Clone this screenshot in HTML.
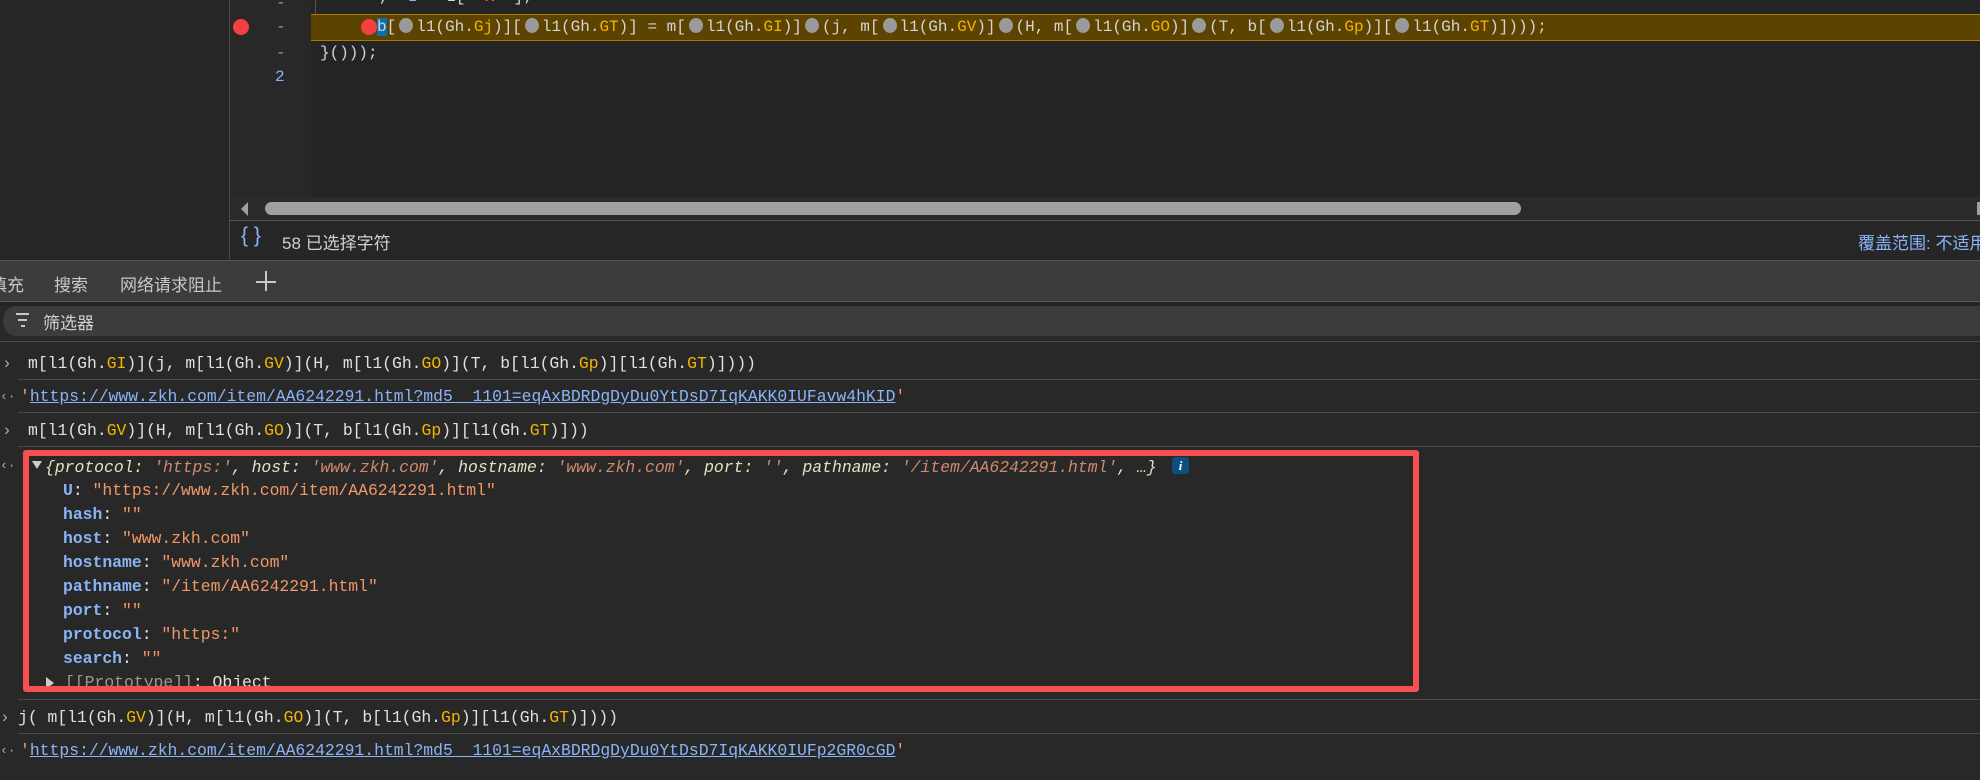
<!DOCTYPE html>
<html><head><meta charset="utf-8"><style>
*{margin:0;padding:0;box-sizing:border-box}
body{width:1980px;height:780px;overflow:hidden;background:#282828;position:relative;font-family:"Liberation Sans","Noto Sans CJK SC",sans-serif;color:#d0d0d0}
.a{position:absolute;white-space:pre}
.mono{font-family:"Liberation Mono","Noto Sans CJK SC",monospace}
.code{font-size:16px;color:#d4d4d4;line-height:25px}
.y{color:#f2b600}
.d{display:inline-block;width:14px;height:15px;border-radius:50%;background:#9a9a9a;margin:0 3px;vertical-align:-2px}
.con{font-size:16.4px;color:#e0e0e0;line-height:24px}
.sep{position:absolute;left:0;width:1980px;height:1px;background:#4a4a4a}
.k{color:#8ab4f8;font-weight:bold}
.s{color:#f29766}
.lnk{color:#8ab4f8;text-decoration:underline}
.pk{color:#e3e3c0}
.pv{color:#d08a6a}
</style></head><body>
<div class="a" style="left:0;top:0;width:229px;height:260px;background:#262626"></div>
<div class="a" style="left:229px;top:0;width:1px;height:260px;background:#4a4a4a"></div>
<div class="a" style="left:230px;top:0;width:81px;height:197px;background:#282828"></div>
<div class="a" style="left:311px;top:0;width:1669px;height:197px;background:#242424"></div>
<div class="a" style="left:315px;top:0;width:1px;height:14px;background:#555"></div>
<div class="a" style="left:233px;top:19px;width:16px;height:16px;border-radius:50%;background:#f44040"></div>
<div class="a mono code" style="left:276px;top:-9px;color:#8a9ab8">-</div>
<div class="a mono code" style="left:276px;top:15px;color:#8a9ab8">-</div>
<div class="a mono code" style="left:276px;top:41px;color:#8a9ab8">-</div>
<div class="a mono code" style="left:275px;top:65px;color:#8ab4f8">2</div>
<div class="a mono code" style="left:379px;top:-15px">,  <span style="color:#8ab4f8">I</span> = L[ <span style="color:#f08050">'K'</span> ];</div>
<div class="a" style="left:311px;top:14px;width:1669px;height:27px;background:#5c4300;border-top:1px solid #a87800;border-bottom:1px solid #a87800"></div>
<div class="a" style="left:361px;top:19px;width:16px;height:16px;border-radius:50%;background:#f44040"></div>
<div class="a mono code" style="left:377px;top:15px"><span style="background:#0a6fb0">b</span>[<span class="d"></span>l1(Gh.<span class="y">Gj</span>)][<span class="d"></span>l1(Gh.<span class="y">GT</span>)] = m[<span class="d"></span>l1(Gh.<span class="y">GI</span>)]<span class="d"></span>(j, m[<span class="d"></span>l1(Gh.<span class="y">GV</span>)]<span class="d"></span>(H, m[<span class="d"></span>l1(Gh.<span class="y">GO</span>)]<span class="d"></span>(T, b[<span class="d"></span>l1(Gh.<span class="y">Gp</span>)][<span class="d"></span>l1(Gh.<span class="y">GT</span>)])));</div>
<div class="a mono code" style="left:320px;top:41px">}()));</div>
<div class="a" style="left:230px;top:197px;width:1750px;height:23px;background:#2a2a2a"></div>
<div class="a" style="left:241px;top:202px;width:0;height:0;border-top:7px solid transparent;border-bottom:7px solid transparent;border-right:7px solid #a0a0a0"></div>
<div class="a" style="left:265px;top:202px;width:1256px;height:13px;border-radius:7px;background:#a0a0a0"></div>
<div class="a" style="left:1977px;top:202px;width:3px;height:13px;background:#a0a0a0"></div>
<div class="a" style="left:230px;top:220px;width:1750px;height:1px;background:#555"></div>
<div class="a" style="left:230px;top:221px;width:1750px;height:39px;background:#262626"></div>
<div class="a" style="left:241px;top:224px;font-size:21px;color:#8ab4f8">{ }</div>
<div class="a" style="left:282px;top:229px;font-size:17px;color:#d0d0d0">58 已选择字符</div>
<div class="a" style="left:1858px;top:229px;font-size:17px;color:#8ab4f8">覆盖范围: 不适用</div>
<div class="a" style="left:0;top:260px;width:1980px;height:1px;background:#555"></div>
<div class="a" style="left:0;top:261px;width:1980px;height:40px;background:#3c3c3c"></div>
<div class="a" style="left:-10px;top:271px;font-size:17px;color:#c8c8c8">填充</div>
<div class="a" style="left:54px;top:271px;font-size:17px;color:#c8c8c8">搜索</div>
<div class="a" style="left:120px;top:271px;font-size:17px;color:#c8c8c8">网络请求阻止</div>
<div class="a" style="left:256px;top:281px;width:20px;height:2px;background:#c8c8c8"></div>
<div class="a" style="left:265px;top:271px;width:2px;height:20px;background:#c8c8c8"></div>
<div class="a" style="left:0;top:301px;width:1980px;height:1px;background:#5a5a5a"></div>
<div class="a" style="left:0;top:302px;width:1980px;height:4px;background:#242424"></div>
<div class="a" style="left:3px;top:306px;width:1977px;height:30px;background:#3c3c3c;border-radius:14px 0 0 14px"></div>
<div class="a" style="left:16px;top:313px;width:13px;height:2px;background:#c8c8c8"></div>
<div class="a" style="left:18px;top:319px;width:9px;height:2px;background:#c8c8c8"></div>
<div class="a" style="left:21px;top:325px;width:4px;height:2px;background:#c8c8c8"></div>
<div class="a" style="left:43px;top:309px;font-size:17px;color:#d0d0d0">筛选器</div>
<div class="sep" style="top:341px"></div>
<div class="a mono con" style="left:2px;top:352px;color:#aaa">›</div>
<div class="a mono con" style="left:28px;top:352px">m[l1(Gh.<span class="y">GI</span>)](j, m[l1(Gh.<span class="y">GV</span>)](H, m[l1(Gh.<span class="y">GO</span>)](T, b[l1(Gh.<span class="y">Gp</span>)][l1(Gh.<span class="y">GT</span>)])))</div>
<div class="sep" style="top:379px;left:18px"></div>
<div class="a mono con" style="left:0;top:385px;color:#aaa;font-size:13px">‹·</div>
<div class="a mono con" style="left:20px;top:385px"><span class="s">'</span><span class="lnk">https://www.zkh.com/item/AA6242291.html?md5__1101=eqAxBDRDgDyDu0YtDsD7IqKAKK0IUFavw4hKID</span><span class="s">'</span></div>
<div class="sep" style="top:412px;left:18px"></div>
<div class="a mono con" style="left:2px;top:419px;color:#aaa">›</div>
<div class="a mono con" style="left:28px;top:419px">m[l1(Gh.<span class="y">GV</span>)](H, m[l1(Gh.<span class="y">GO</span>)](T, b[l1(Gh.<span class="y">Gp</span>)][l1(Gh.<span class="y">GT</span>)]))</div>
<div class="sep" style="top:446px;left:18px"></div>
<div class="a mono con" style="left:0;top:454px;color:#aaa;font-size:13px">‹·</div>
<div class="a" style="left:23px;top:450px;width:1396px;height:242px;border:6px solid #f85050;border-radius:3px;overflow:hidden">
<div class="a" style="left:3px;top:5px;width:0;height:0;border-left:5px solid transparent;border-right:5px solid transparent;border-top:8px solid #ccc"></div>
<div class="a mono con" style="left:16px;top:0px;font-style:italic"><span class="pk">{protocol: </span><span class="pv">'https:'</span><span class="pk">, host: </span><span class="pv">'www.zkh.com'</span><span class="pk">, hostname: </span><span class="pv">'www.zkh.com'</span><span class="pk">, port: </span><span class="pv">''</span><span class="pk">, pathname: </span><span class="pv">'/item/AA6242291.html'</span><span class="pk">, …}</span></div>
<div class="a" style="left:1143px;top:1px;width:17px;height:17px;border-radius:3px;background:#0b4f82;color:#fff;font:bold italic 13px 'Liberation Serif',serif;text-align:center;line-height:17px">i</div>
<div class="a mono con" style="left:34px;top:23px"><span class="k">U</span>: <span class="s">"https://www.zkh.com/item/AA6242291.html"</span></div>
<div class="a mono con" style="left:34px;top:47px"><span class="k">hash</span>: <span class="s">""</span></div>
<div class="a mono con" style="left:34px;top:71px"><span class="k">host</span>: <span class="s">"www.zkh.com"</span></div>
<div class="a mono con" style="left:34px;top:95px"><span class="k">hostname</span>: <span class="s">"www.zkh.com"</span></div>
<div class="a mono con" style="left:34px;top:119px"><span class="k">pathname</span>: <span class="s">"/item/AA6242291.html"</span></div>
<div class="a mono con" style="left:34px;top:143px"><span class="k">port</span>: <span class="s">""</span></div>
<div class="a mono con" style="left:34px;top:167px"><span class="k">protocol</span>: <span class="s">"https:"</span></div>
<div class="a mono con" style="left:34px;top:191px"><span class="k">search</span>: <span class="s">""</span></div>
<div class="a" style="left:17px;top:221px;width:0;height:0;border-top:6px solid transparent;border-bottom:6px solid transparent;border-left:8px solid #ccc"></div>
<div class="a mono con" style="left:36px;top:215px"><span style="color:#999">[[Prototype]]</span>: Object</div>
</div>
<div class="sep" style="top:699px;left:18px"></div>
<div class="a mono con" style="left:0;top:706px;color:#aaa">›</div>
<div class="a mono con" style="left:18px;top:706px">j( m[l1(Gh.<span class="y">GV</span>)](H, m[l1(Gh.<span class="y">GO</span>)](T, b[l1(Gh.<span class="y">Gp</span>)][l1(Gh.<span class="y">GT</span>)])))</div>
<div class="sep" style="top:733px;left:18px"></div>
<div class="a mono con" style="left:0;top:739px;color:#aaa;font-size:13px">‹·</div>
<div class="a mono con" style="left:20px;top:739px"><span class="s">'</span><span class="lnk">https://www.zkh.com/item/AA6242291.html?md5__1101=eqAxBDRDgDyDu0YtDsD7IqKAKK0IUFp2GR0cGD</span><span class="s">'</span></div>
</body></html>
